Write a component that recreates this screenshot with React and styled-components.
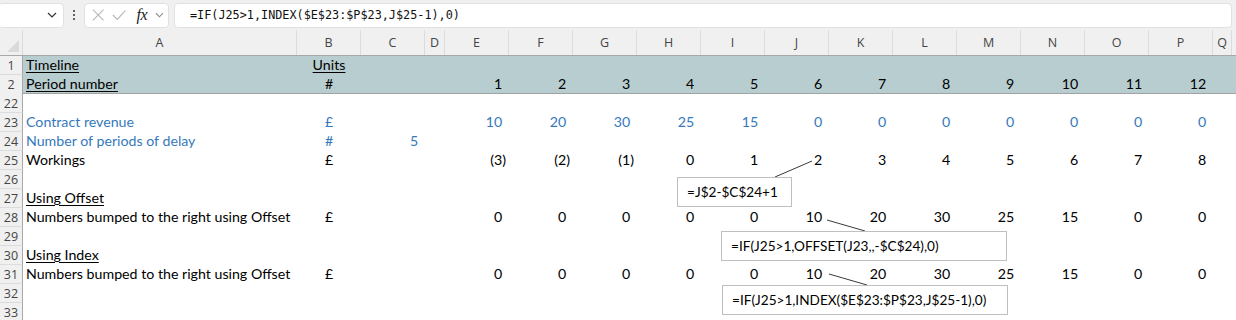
import React from 'react'
import styled, { createGlobalStyle } from 'styled-components'

const GlobalStyle = createGlobalStyle`
  html, body {
    margin: 0;
    padding: 0;
    background: #ffffff;
  }
  body {
    font-family: Lato, "Open Sans", sans-serif;
    overflow: hidden;
  }
`

const COLS = ['A', 'B', 'C', 'D', 'E', 'F', 'G', 'H', 'I', 'J', 'K', 'L', 'M', 'N', 'O', 'P', 'Q']
const WIDTHS = [274, 64, 64, 20, 64, 64, 64, 64, 64, 64, 64, 64, 64, 64, 64, 64, 19]
const TEMPLATE = `23px ${WIDTHS.map(w => `${w}px`).join(' ')} 1fr`

const BLUE = '#3579bb'

const Page = styled.div`
  position: relative;
  width: 1236px;
  height: 320px;
  overflow: hidden;
`

/* formula bar */
const FormulaBar = styled.div`
  display: flex;
  align-items: center;
  height: 30px;
  background: #f0f0f0;
  padding: 0 4px 0 0;
  box-sizing: border-box;
`

const NameBox = styled.div`
  display: flex;
  align-items: center;
  justify-content: flex-end;
  width: 66px;
  height: 25px;
  margin-left: -2px;
  padding-right: 6px;
  box-sizing: border-box;
  background: #fff;
  border: 1px solid #e1e1e1;
  border-radius: 4px;
`

const Dots = styled.div`
  display: flex;
  flex-direction: column;
  gap: 2px;
  margin: 0 9px 0 9px;
  span {
    width: 2px;
    height: 2px;
    background: #333;
    border-radius: 1px;
  }
`

const ActionBox = styled.div`
  display: flex;
  align-items: center;
  gap: 8px;
  width: 85px;
  height: 25px;
  padding: 0 4px 0 7px;
  box-sizing: border-box;
  background: #fff;
  border: 1px solid #e1e1e1;
  border-radius: 4px;
`

const Fx = styled.span`
  font-family: "Liberation Serif", serif;
  font-style: italic;
  font-size: 16px;
  color: #222;
  margin-left: 2px;
  letter-spacing: -0.5px;
`

const FormulaInput = styled.div`
  flex: 1;
  display: flex;
  align-items: center;
  height: 25px;
  margin-left: 5px;
  padding-left: 15px;
  box-sizing: border-box;
  background: #fff;
  border: 1px solid #e1e1e1;
  border-radius: 4px;
  font-family: "DejaVu Sans Mono", "Liberation Mono", monospace;
  font-size: 11.8px;
  color: #111;
`

/* grid */
const Row = styled.div`
  display: grid;
  grid-template-columns: ${TEMPLATE};
  height: ${p => p.$h || 19}px;
  background: ${p => (p.$band ? '#b8cdcf' : '#fff')};
  border-bottom: ${p => (p.$frozen ? '1.5px solid #a2a2a2' : 'none')};
  box-sizing: border-box;
`

const HeaderRow = styled(Row)`
  background: #f0f0f0;
  border-bottom: 1.5px solid #a8a8a8;
`

const ColHead = styled.div`
  display: flex;
  align-items: center;
  justify-content: center;
  font-family: "Open Sans", sans-serif;
  font-size: 12.5px;
  color: #444;
  border-right: 1px solid #dcdcdc;
`

const Corner = styled.div`
  position: relative;
  border-right: 1px solid #dcdcdc;
  &::after {
    content: '';
    position: absolute;
    right: 3px;
    bottom: 3px;
    border-style: solid;
    border-width: 0 0 12px 12px;
    border-color: transparent transparent #dadada transparent;
  }
`

const RowHead = styled.div`
  display: flex;
  align-items: center;
  justify-content: center;
  background: #f0f0f0;
  font-family: "Open Sans", sans-serif;
  font-size: 12.5px;
  color: #444;
  border-right: 1.5px solid #a8a8a8;
  border-bottom: ${p => (p.$last ? 'none' : '1px solid #dcdcdc')};
  box-sizing: border-box;
`

const Cell = styled.div`
  display: flex;
  align-items: center;
  justify-content: ${p => (p.$align === 'right' ? 'flex-end' : p.$align === 'center' ? 'center' : 'flex-start')};
  padding: 0 3px 2px 3px;
  font-size: 14.2px;
  line-height: 17px;
  white-space: nowrap;
  overflow: visible;
  color: ${p => (p.$blue ? BLUE : '#000')};
  min-width: 0;
`

const Text = styled.span`
  text-decoration: ${p => (p.$u ? 'underline' : 'none')};
  text-underline-offset: 2px;
  text-decoration-thickness: 1px;
`

const Pad = styled.span`
  visibility: hidden;
`

/* callouts */
const Callout = styled.div`
  position: absolute;
  display: flex;
  align-items: center;
  padding-left: 9px;
  box-sizing: border-box;
  background: #fff;
  border: 1px solid #bfbfbf;
  font-size: 13.6px;
  color: #000;
  white-space: nowrap;
`

const Leaders = styled.svg`
  position: absolute;
  left: 0;
  top: 0;
  pointer-events: none;
`

const fmt = n => {
  if (n === undefined || n === null) return null
  if (n < 0) return <span>({Math.abs(n)})</span>
  return (
    <span>
      {n}
      <Pad>)</Pad>
    </span>
  )
}

const PERIODS = [1, 2, 3, 4, 5, 6, 7, 8, 9, 10, 11, 12]
const REVENUE = [10, 20, 30, 25, 15, 0, 0, 0, 0, 0, 0, 0]
const WORKINGS = [-3, -2, -1, 0, 1, 2, 3, 4, 5, 6, 7, 8]
const BUMPED = [0, 0, 0, 0, 0, 10, 20, 30, 25, 15, 0, 0]

const ROWS = [
  { n: 1, band: true, a: 'Timeline', au: true, b: 'Units', bu: true },
  { n: 2, band: true, frozen: true, a: 'Period number', au: true, b: '#', nums: PERIODS },
  { n: 22 },
  { n: 23, blue: true, a: 'Contract revenue', b: '£', nums: REVENUE },
  { n: 24, blue: true, a: 'Number of periods of delay', b: '#', c: 5 },
  { n: 25, a: 'Workings', b: '£', nums: WORKINGS },
  { n: 26 },
  { n: 27, a: 'Using Offset', au: true },
  { n: 28, a: 'Numbers bumped to the right using Offset', b: '£', nums: BUMPED },
  { n: 29 },
  { n: 30, a: 'Using Index', au: true },
  { n: 31, a: 'Numbers bumped to the right using Offset', b: '£', nums: BUMPED },
  { n: 32 },
  { n: 33, last: true },
]

const SheetRow = ({ r }) => (
  <Row $band={r.band} $frozen={r.frozen}>
    <RowHead $last={r.last || r.frozen}>{r.n}</RowHead>
    <Cell $blue={r.blue}>
      <Text $u={r.au}>{r.a}</Text>
    </Cell>
    <Cell $align="center" $blue={r.blue}>
      <Text $u={r.bu}>{r.b}</Text>
    </Cell>
    <Cell $align="right" $blue={r.blue}>
      {fmt(r.c)}
    </Cell>
    <Cell />
    {PERIODS.map((p, i) => (
      <Cell key={p} $align="right" $blue={r.blue}>
        {r.nums ? fmt(r.nums[i]) : null}
      </Cell>
    ))}
    <Cell />
    <Cell />
  </Row>
)

const Chevron = ({ color = '#333' }) => (
  <svg width="10" height="6" viewBox="0 0 10 6">
    <path d="M1 1 L5 5 L9 1" fill="none" stroke={color} strokeWidth="1.2" />
  </svg>
)

const App = () => (
  <Page>
    <GlobalStyle />
    <FormulaBar>
      <NameBox>
        <Chevron />
      </NameBox>
      <Dots>
        <span />
        <span />
        <span />
      </Dots>
      <ActionBox>
        <svg width="14" height="14" viewBox="0 0 14 14">
          <path d="M1 1 L13 13 M13 1 L1 13" stroke="#b5b5b5" strokeWidth="1.2" />
        </svg>
        <svg width="16" height="14" viewBox="0 0 16 14">
          <path d="M1 7 L6 12 L15 2" fill="none" stroke="#b5b5b5" strokeWidth="1.2" />
        </svg>
        <Fx>fx</Fx>
        <Chevron color="#888" />
      </ActionBox>
      <FormulaInput>=IF(J25&gt;1,INDEX($E$23:$P$23,J$25-1),0)</FormulaInput>
    </FormulaBar>

    <HeaderRow $h={26}>
      <Corner />
      {COLS.map(c => (
        <ColHead key={c}>{c}</ColHead>
      ))}
      <div />
    </HeaderRow>

    {ROWS.map(r => (
      <SheetRow key={r.n} r={r} />
    ))}

    <Leaders width="1236" height="320">
      <line x1="775" y1="177" x2="812" y2="161" stroke="#3a3a3a" strokeWidth="1" />
      <line x1="827" y1="220" x2="865" y2="231" stroke="#3a3a3a" strokeWidth="1" />
      <line x1="829" y1="274" x2="867" y2="285" stroke="#3a3a3a" strokeWidth="1" />
    </Leaders>
    <Callout style={{ left: 677, top: 177, width: 115, height: 30 }}>=J$2-$C$24+1</Callout>
    <Callout style={{ left: 721, top: 231, width: 286, height: 30 }}>
      =IF(J25&gt;1,OFFSET(J23,,-$C$24),0)
    </Callout>
    <Callout style={{ left: 722, top: 285, width: 286, height: 30 }}>
      =IF(J25&gt;1,INDEX($E$23:$P$23,J$25-1),0)
    </Callout>
  </Page>
)

export default App
